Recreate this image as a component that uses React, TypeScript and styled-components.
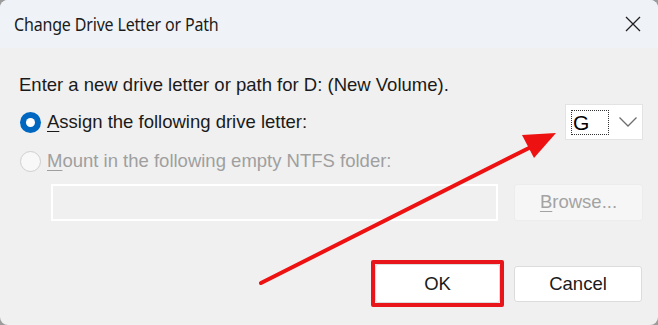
import React from "react";
import styled, { createGlobalStyle } from "styled-components";

const GlobalStyle = createGlobalStyle`
  html, body {
    margin: 0;
    padding: 0;
    background: #9c9c9c;
  }
  #root {
    width: 658px;
    height: 325px;
  }
`;

const Dialog = styled.div`
  position: relative;
  width: 658px;
  height: 325px;
  background: #f0f0f0;
  border-radius: 8px;
  overflow: hidden;
  display: flex;
  flex-direction: column;
  font-family: "Liberation Sans", Arial, sans-serif;
  color: #1a1a1a;
`;

const TitleBar = styled.div`
  height: 48px;
  flex: 0 0 48px;
  background: #eff3f8;
  display: flex;
  align-items: center;
  justify-content: space-between;
  padding: 0 17px 0 14px;
  box-sizing: border-box;
`;

const Title = styled.div`
  font-family: "Noto Sans", "Open Sans", sans-serif;
  font-size: 18px;
  letter-spacing: -0.2px;
  transform: scaleX(0.89);
  transform-origin: left center;
  color: #1b1b1b;
  margin-top: -1px;
`;

const CloseButton = styled.div`
  width: 16px;
  height: 16px;
  display: flex;
  margin-top: -1px;
`;

const Body = styled.div`
  flex: 1;
  padding: 27px 15px 0 19px;
  display: flex;
  flex-direction: column;
  font-size: 18.5px;
`;

const Prompt = styled.div`
  height: 20px;
  line-height: 20px;
`;

const OptionRow = styled.div<{ $top: number; $height: number }>`
  margin-top: ${(p) => p.$top}px;
  height: ${(p) => p.$height}px;
  display: flex;
  align-items: center;
  justify-content: space-between;
`;

const RadioLabel = styled.label<{ $disabled?: boolean }>`
  display: flex;
  align-items: center;
  gap: 6px;
  color: ${(p) => (p.$disabled ? "#9f9f9f" : "#1a1a1a")};
`;

const Radio = styled.span<{ $checked?: boolean }>`
  width: 21px;
  height: 21px;
  box-sizing: border-box;
  border-radius: 50%;
  margin-left: 1px;
  display: flex;
  align-items: center;
  justify-content: center;
  background: ${(p) => (p.$checked ? "#0067c0" : "#f8f8f8")};
  border: ${(p) => (p.$checked ? "none" : "1px solid #cfcfcf")};
  &::after {
    content: "";
    display: ${(p) => (p.$checked ? "block" : "none")};
    width: 9px;
    height: 9px;
    border-radius: 50%;
    background: #ffffff;
  }
`;

const Key = styled.span`
  text-decoration: underline;
  text-underline-offset: 3px;
  text-decoration-thickness: 1px;
`;

const Combo = styled.div`
  width: 78px;
  height: 36px;
  box-sizing: border-box;
  background: #ffffff;
  border: 1px solid #e3e3e3;
  display: flex;
  align-items: center;
  padding-left: 5px;
  gap: 9px;
`;

const ComboValue = styled.div`
  width: 38px;
  height: 25px;
  box-sizing: border-box;
  border: 1px dotted #333;
  font-size: 21px;
  line-height: 23px;
  padding-left: 1px;
  color: #000;
`;

const FieldRow = styled.div`
  margin-top: 13px;
  height: 37px;
  padding-left: 32px;
  display: flex;
  gap: 16px;
`;

const PathField = styled.div`
  flex: 1;
  box-sizing: border-box;
  border: 2px solid #ffffff;
  background: #f0f0f0;
`;

const BrowseButton = styled.div`
  width: 129px;
  box-sizing: border-box;
  background: #f6f6f6;
  border: 1px solid #ececec;
  border-radius: 3px;
  display: flex;
  align-items: center;
  justify-content: center;
  color: #a3a3a3;
  padding-bottom: 2px;
`;

const ButtonRow = styled.div`
  margin-top: 39px;
  height: 47px;
  display: flex;
  align-items: center;
  justify-content: flex-end;
  gap: 10px;
  padding-right: 1px;
`;

const Highlight = styled.div`
  border: 4px solid #e8161b;
  border-radius: 2px;
  display: flex;
`;

const Button = styled.div<{ $w: number; $h: number }>`
  width: ${(p) => p.$w}px;
  height: ${(p) => p.$h}px;
  box-sizing: border-box;
  background: #ffffff;
  border: 1px solid #dcdcdc;
  border-radius: 3px;
  display: flex;
  align-items: center;
  justify-content: center;
  color: #1a1a1a;
`;

const Overlay = styled.svg`
  position: absolute;
  left: 0;
  top: 0;
  pointer-events: none;
`;

export default function App() {
  return (
    <>
      <GlobalStyle />
      <Dialog>
        <TitleBar>
          <Title>Change Drive Letter or Path</Title>
          <CloseButton>
            <svg width="16" height="16" viewBox="0 0 16 16">
              <path d="M1 1 L15 15 M15 1 L1 15" stroke="#1f1f1f" strokeWidth="1.3" fill="none" />
            </svg>
          </CloseButton>
        </TitleBar>
        <Body>
          <Prompt>Enter a new drive letter or path for D: (New Volume).</Prompt>
          <OptionRow $top={9} $height={36}>
            <RadioLabel>
              <Radio $checked />
              <span>
                <Key>A</Key>ssign the following drive letter:
              </span>
            </RadioLabel>
            <Combo>
              <ComboValue>G</ComboValue>
              <svg width="20" height="12" viewBox="0 0 20 12">
                <path d="M1.5 1.5 L10 10 L18.5 1.5" stroke="#6e6e6e" strokeWidth="1.3" fill="none" />
              </svg>
            </Combo>
          </OptionRow>
          <OptionRow $top={11} $height={20}>
            <RadioLabel $disabled>
              <Radio />
              <span>
                <Key>M</Key>ount in the following empty NTFS folder:
              </span>
            </RadioLabel>
          </OptionRow>
          <FieldRow>
            <PathField />
            <BrowseButton>
              <span>
                <Key>B</Key>rowse...
              </span>
            </BrowseButton>
          </FieldRow>
          <ButtonRow>
            <Highlight>
              <Button $w={125} $h={39}>OK</Button>
            </Highlight>
            <Button $w={128} $h={36}>Cancel</Button>
          </ButtonRow>
        </Body>
        <Overlay width="658" height="325" viewBox="0 0 658 325">
          <line x1="261" y1="283" x2="535" y2="145" stroke="#ee1111" strokeWidth="4" strokeLinecap="round" />
          <polygon points="556,133 522,135 534,158" fill="#ee1111" />
        </Overlay>
      </Dialog>
    </>
  );
}
